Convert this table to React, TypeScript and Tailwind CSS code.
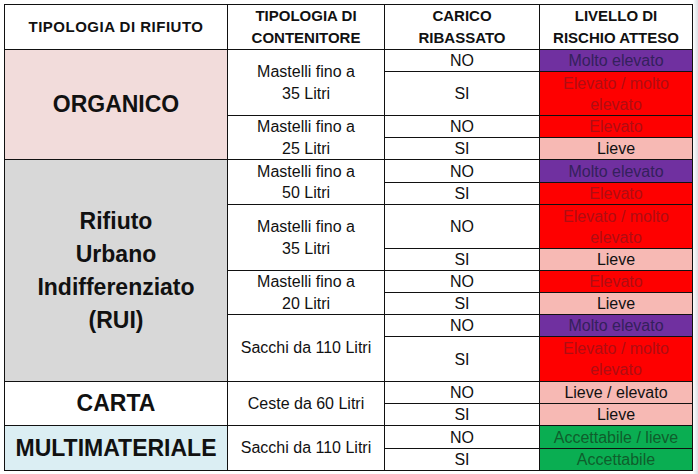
import type { ReactNode } from "react";

type Level = "purple" | "red" | "pink" | "green";

interface Row {
  h: number;
  cat?: { label: ReactNode; span: number; bg: string };
  cont?: { text: ReactNode; span: number };
  carico: "NO" | "SI";
  level: Level;
  risk: ReactNode;
}

const levelClass: Record<Level, string> = {
  purple: "bg-[#7030a0] text-[#34205c]",
  red: "bg-[#fe0000] text-[#b00d12]",
  pink: "bg-[#f7b9b4] text-[#111]",
  green: "bg-[#0aae52] text-[#0f5e2c]",
};

const elevatoMolto = (
  <>
    Elevato / molto
    <br />
    elevato
  </>
);

const mastelli = (l: string) => (
  <>
    Mastelli fino a
    <br />
    {l}
  </>
);

const rows: Row[] = [
  {
    h: 22,
    cat: { label: "ORGANICO", span: 4, bg: "bg-[#f2dcdb]" },
    cont: { text: mastelli("35 Litri"), span: 2 },
    carico: "NO",
    level: "purple",
    risk: "Molto elevato",
  },
  { h: 44, carico: "SI", level: "red", risk: elevatoMolto },
  { h: 22, cont: { text: mastelli("25 Litri"), span: 2 }, carico: "NO", level: "red", risk: "Elevato" },
  { h: 22, carico: "SI", level: "pink", risk: "Lieve" },
  {
    h: 23,
    cat: {
      label: (
        <>
          Rifiuto
          <br />
          Urbano
          <br />
          Indifferenziato
          <br />
          (RUI)
        </>
      ),
      span: 8,
      bg: "bg-[#d8d8d8]",
    },
    cont: { text: mastelli("50 Litri"), span: 2 },
    carico: "NO",
    level: "purple",
    risk: "Molto elevato",
  },
  { h: 22, carico: "SI", level: "red", risk: "Elevato" },
  { h: 44, cont: { text: mastelli("35 Litri"), span: 2 }, carico: "NO", level: "red", risk: elevatoMolto },
  { h: 22, carico: "SI", level: "pink", risk: "Lieve" },
  { h: 22, cont: { text: mastelli("20 Litri"), span: 2 }, carico: "NO", level: "red", risk: "Elevato" },
  { h: 22, carico: "SI", level: "pink", risk: "Lieve" },
  { h: 22, cont: { text: "Sacchi da 110 Litri", span: 2 }, carico: "NO", level: "purple", risk: "Molto elevato" },
  { h: 45, carico: "SI", level: "red", risk: elevatoMolto },
  {
    h: 22,
    cat: { label: "CARTA", span: 2, bg: "bg-white" },
    cont: { text: "Ceste da 60 Litri", span: 2 },
    carico: "NO",
    level: "pink",
    risk: "Lieve / elevato",
  },
  { h: 22, carico: "SI", level: "pink", risk: "Lieve" },
  {
    h: 23,
    cat: { label: "MULTIMATERIALE", span: 2, bg: "bg-[#dbeef3]" },
    cont: { text: "Sacchi da 110 Litri", span: 2 },
    carico: "NO",
    level: "green",
    risk: "Accettabile / lieve",
  },
  { h: 21, carico: "SI", level: "green", risk: "Accettabile" },
];

const cell = "border border-[#111] p-0 text-center align-middle";

export default function App() {
  return (
    <div className="flex w-[698px] h-[474px] bg-white font-['Liberation_Sans',Arial,sans-serif] text-[#111]">
      <div className="pt-[4px] pl-[4px]">
        <table className="table-fixed border-collapse w-[688px]">
          <colgroup>
            <col className="w-[223px]" />
            <col className="w-[157px]" />
            <col className="w-[155px]" />
            <col className="w-[153px]" />
          </colgroup>
          <thead>
            <tr className="h-[45px] text-[15px] font-bold leading-[22px]">
              <th className={`${cell} tracking-[0.5px]`}>TIPOLOGIA DI RIFIUTO</th>
              <th className={cell}>
                TIPOLOGIA DI
                <br />
                CONTENITORE
              </th>
              <th className={cell}>
                CARICO
                <br />
                RIBASSATO
              </th>
              <th className={cell}>
                LIVELLO DI
                <br />
                RISCHIO ATTESO
              </th>
            </tr>
          </thead>
          <tbody className="text-[16px] leading-[21px]">
            {rows.map((r, i) => (
              <tr key={i} style={{ height: r.h }}>
                {r.cat && (
                  <td
                    rowSpan={r.cat.span}
                    className={`${cell} ${r.cat.bg} text-[23px] font-bold leading-[33px]`}
                  >
                    {r.cat.label}
                  </td>
                )}
                {r.cont && (
                  <td rowSpan={r.cont.span} className={`${cell} leading-[21.5px]`}>
                    {r.cont.text}
                  </td>
                )}
                <td className={cell}>{r.carico}</td>
                <td className={`${cell} ${levelClass[r.level]}`}>{r.risk}</td>
              </tr>
            ))}
          </tbody>
        </table>
      </div>
      <div className="flex-1 bg-gradient-to-r from-white to-[#dde1e6]" />
    </div>
  );
}
